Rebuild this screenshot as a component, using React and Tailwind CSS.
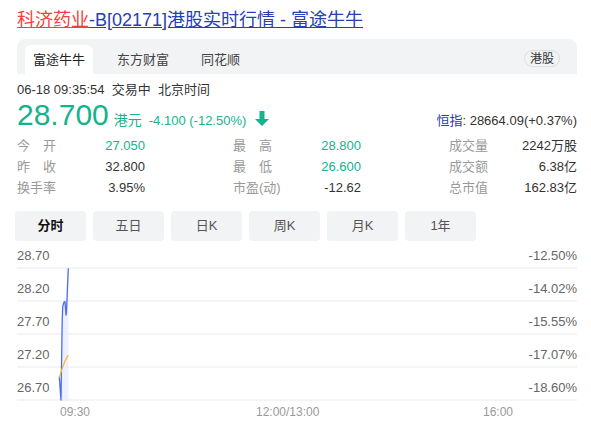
import React from 'react';

const GREEN = 'text-[#14b38d]';

const TABS = ['富途牛牛', '东方财富', '同花顺'];
const PERIODS = ['分时', '五日', '日K', '周K', '月K', '1年'];
const Y_ROWS = [
    ['28.70', '-12.50%'],
    ['28.20', '-14.02%'],
    ['27.70', '-15.55%'],
    ['27.20', '-17.07%'],
    ['26.70', '-18.60%'],
];

const Label = ({ text }) => {
    // two-char labels are spread over the width of three
    if (text.length === 2) {
        return (
            <span className="flex w-[39px] justify-between text-[#999]">
                <span>{text[0]}</span>
                <span>{text[1]}</span>
            </span>
        );
    }
    return <span className="text-[#999]">{text}</span>;
};

const Stat = ({ label, value, green }) => (
    <div className="flex justify-between items-center w-[128px]">
        <Label text={label} />
        <span className={green ? GREEN : 'text-[#333]'}>{value}</span>
    </div>
);

const Chart = () => (
    <div className="relative">
        {Y_ROWS.map(([left, right], i) => (
            <div
                key={left}
                className={`flex items-end justify-between pb-[4px] border-b-2 border-[#f3f4f6] text-[13px] leading-[15px] text-[#666] ${i === 0 ? 'h-[28px]' : 'h-[33px]'}`}
            >
                <span>{left}</span>
                <span>{right}</span>
            </div>
        ))}
        <svg className="absolute left-0 top-0 pointer-events-none" width="560" height="160" viewBox="0 0 560 160">
            <polygon
                points="42.3,135.7 44,159 45.7,65.7 47,61 48,60.7 49,74 51.3,27.3 51.3,160 42.3,160"
                fill="#e8ecfd"
                opacity="0.8"
            />
            <polyline
                points="42.3,135.7 44,159 45.2,80 45.7,65.7 47,61 48,60.7 49,74 49.4,72 51.3,27.3"
                fill="none"
                stroke="#4a6cf7"
                strokeWidth="1.3"
                strokeLinejoin="round"
            />
            <polyline
                points="42.3,136.5 45,128 48,120 51.3,114"
                fill="none"
                stroke="#f5b82e"
                strokeWidth="1.2"
            />
        </svg>
        <div className="relative h-[22px] text-[12px] leading-[22px] text-[#999]">
            <span className="absolute left-[43px]">09:30</span>
            <span className="absolute left-[239px]">12:00/13:00</span>
            <span className="absolute left-[466px]">16:00</span>
        </div>
    </div>
);

export default function App() {
    return (
        <div className="w-[591px] h-[425px] bg-white overflow-hidden pl-[17px] pr-[14px] font-['Liberation_Sans','Noto_Sans_CJK_SC',sans-serif]">
            <div className="w-[560px]">
                <div className="pt-[8px] text-[18px] leading-[24px]">
                    <a className="underline text-[#f5403c]">科济药业</a>
                    <a className="underline text-[#2440b3]">-B[02171]港股实时行情 - 富途牛牛</a>
                </div>

                <div className="mt-[7px] h-[35px] bg-[#f2f3f5] rounded-t-lg flex items-end justify-between pl-[8px] pr-[17px]">
                    <div className="flex gap-4">
                        {TABS.map((tab, i) => (
                            <div
                                key={tab}
                                className={`h-[29px] w-[68px] px-2 flex items-center text-[13px] rounded-t-md ${i === 0 ? 'bg-white text-[#222]' : 'text-[#444]'}`}
                            >
                                {tab}
                            </div>
                        ))}
                    </div>
                    <span className="mb-[7px] px-[5px] h-[17px] flex items-center text-[12px] text-[#333] border border-[#ddd] rounded-full">港股</span>
                </div>

                <div className="mt-[8px] text-[13px] leading-[16px] text-[#333]">
                    06-18 09:35:54&nbsp; 交易中&nbsp; 北京时间
                </div>

                <div className="flex items-baseline justify-between h-[34px]">
                    <div className={`flex items-baseline ${GREEN}`}>
                        <span className="text-[30px] leading-[34px]">28.700</span>
                        <span className="ml-[5px] text-[14px]">港元</span>
                        <span className="ml-[7px] text-[13px]">-4.100 (-12.50%)</span>
                        <svg className="ml-[9px] self-center mt-[6px]" width="14" height="15" viewBox="0 0 14 15">
                            <path d="M4.5 0h5v8h4.5L7 15L0 8h4.5z" fill="#14b38d" />
                        </svg>
                    </div>
                    <span className="text-[13px] text-[#333]">
                        <span className="text-[#2440b3]">恒指</span>: 28664.09(+0.37%)
                    </span>
                </div>

                <div className="mt-[3px] grid grid-cols-[216px_216px_128px] text-[13px] leading-[21px]">
                    <Stat label="今开" value="27.050" green />
                    <Stat label="最高" value="28.800" green />
                    <Stat label="成交量" value="2242万股" />
                    <Stat label="昨收" value="32.800" />
                    <Stat label="最低" value="26.600" green />
                    <Stat label="成交额" value="6.38亿" />
                    <Stat label="换手率" value="3.95%" />
                    <Stat label="市盈(动)" value="-12.62" />
                    <Stat label="总市值" value="162.83亿" />
                </div>

                <div className="mt-[13px] -ml-[2px] flex gap-[7px]">
                    {PERIODS.map((p, i) => (
                        <div
                            key={p}
                            className={`w-[71px] h-[30px] flex items-center justify-center rounded-[4px] bg-[#f2f3f5] text-[13px] ${i === 0 ? 'font-bold text-[#111]' : 'text-[#555]'}`}
                        >
                            {p}
                        </div>
                    ))}
                </div>

                <Chart />
            </div>
        </div>
    );
}
